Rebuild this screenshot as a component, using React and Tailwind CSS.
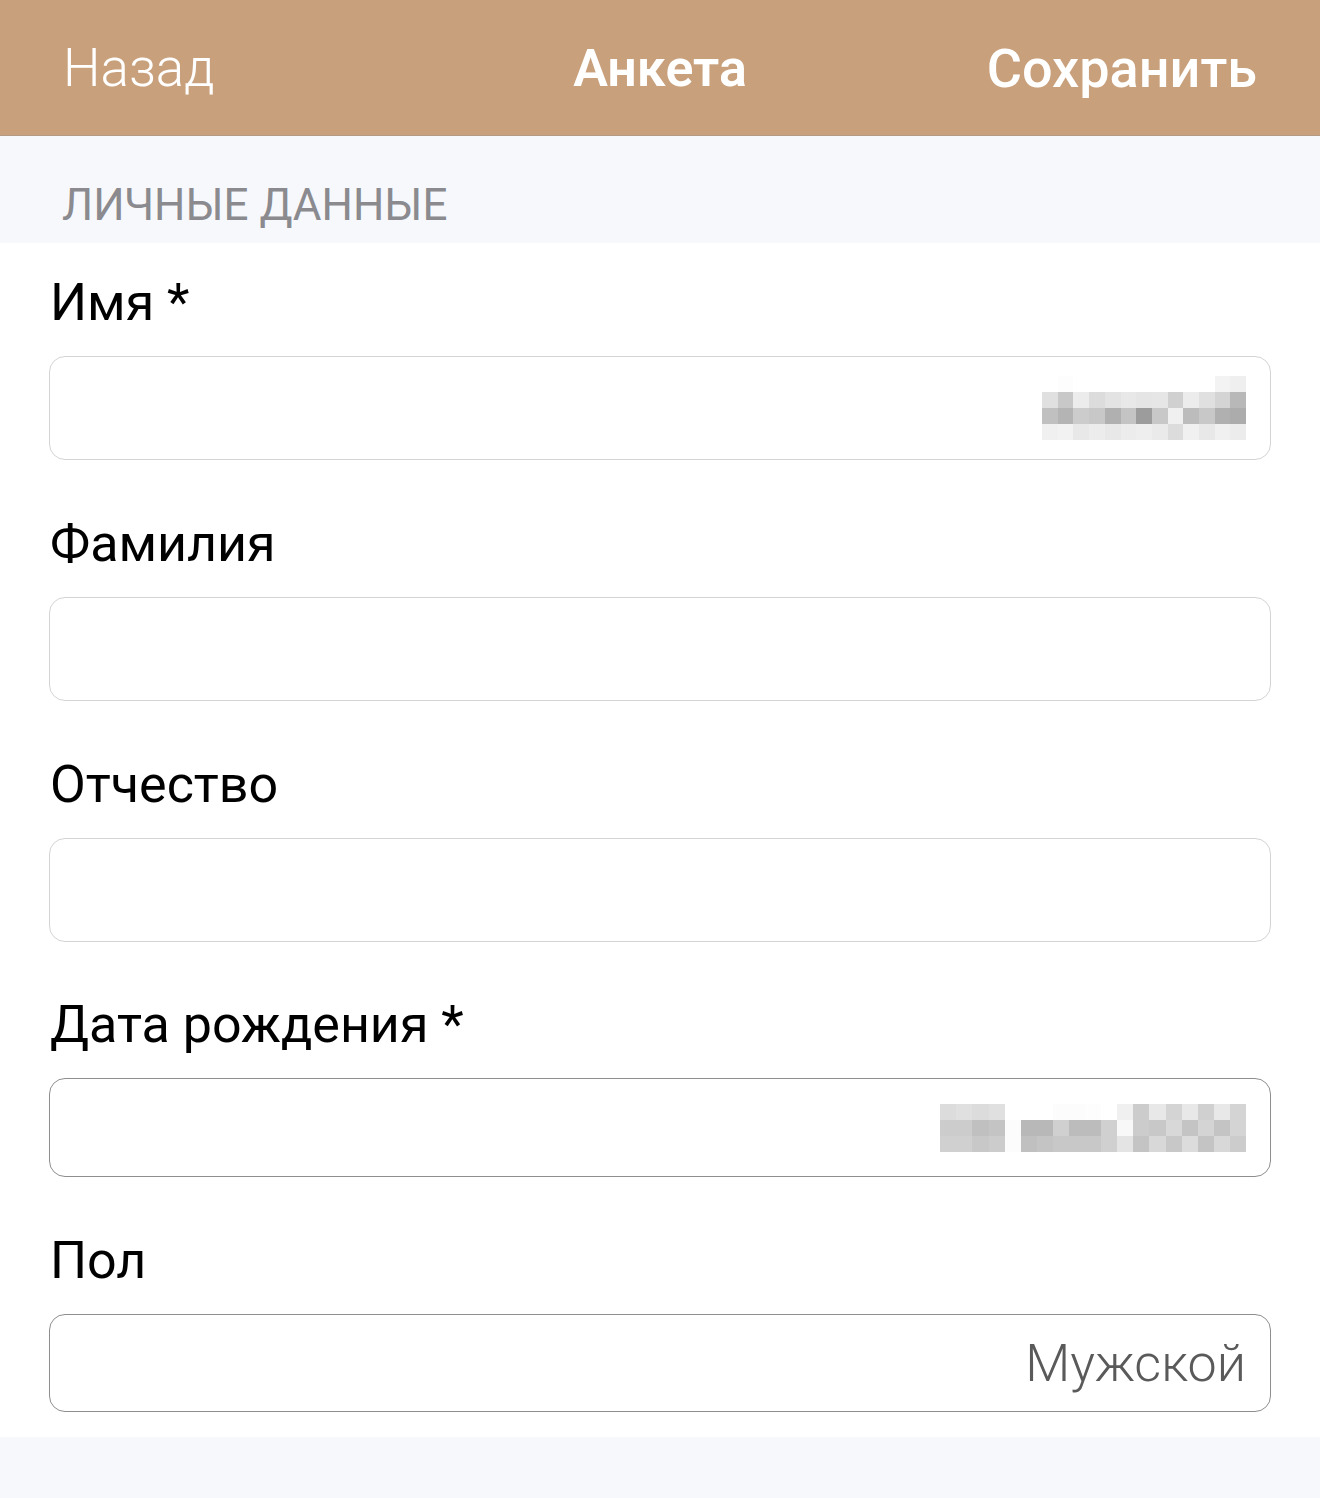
import React from "react";

const F = { fontFamily: "Roboto, 'Liberation Sans', sans-serif" };

const mosaic1 = [
  ["#ffffff","#fdfdfd","#ffffff","#ffffff","#ffffff","#ffffff","#ffffff","#ffffff","#ffffff","#ffffff","#ffffff","#f3f3f3","#efefef"],
  ["#e0e0e0","#c8c8c8","#ececec","#dcdcdc","#e3e3e3","#e8e8e8","#e5e5e5","#e6e6e6","#d0d0d0","#ececec","#e0e0e0","#d4d4d4","#b8b8b8"],
  ["#c0c0c0","#b4b4b4","#cccccc","#c8c8c8","#b0b0b0","#c4c4c4","#9c9c9c","#c8c8c8","#f0f0f0","#bcbcbc","#c8c8c8","#b0b0b0","#acacac"],
  ["#f0f0f0","#f2f2f2","#e8e8e8","#ececec","#e8e8e8","#ececec","#eeeeee","#eaeaea","#dcdcdc","#f0f0f0","#e8e8e8","#f0f0f0","#ececec"],
];

const mosaic2 = [
  ["#dcdcdc","#e0e0e0","#dcdcdc","#e0e0e0","#ffffff","#ffffff","#ffffff","#fcfcfc","#fcfcfc","#fdfdfd","#ffffff","#f0f0f0","#cccccc","#e8e8e8","#d4d4d4","#e8e8e8","#d0d0d0","#e8e8e8","#d4d4d4"],
  ["#cccccc","#cccccc","#c0c0c0","#c4c4c4","#fcfcfc","#b8b8b8","#b8b8b8","#d0d0d0","#bcbcbc","#bcbcbc","#d0d0d0","#f8f8f8","#cccccc","#c8c8c8","#d8d8d8","#c4c4c4","#d4d4d4","#c4c4c4","#d4d4d4"],
  ["#d0d0d0","#d0d0d0","#c8c8c8","#cccccc","#fcfcfc","#c0c0c0","#c4c4c4","#c8c8c8","#c8c8c8","#c8c8c8","#d0d0d0","#e4e4e4","#c4c4c4","#d8d8d8","#c8c8c8","#dcdcdc","#c4c4c4","#d8d8d8","#cccccc"],
];

function Mosaic({ data, cell }) {
  return (
    <div className="flex flex-col">
      {data.map((row, i) => (
        <div key={i} className="flex">
          {row.map((c, j) => (
            <div key={j} style={{ background: c, width: cell, height: 16 }} />
          ))}
        </div>
      ))}
    </div>
  );
}

function Field({ label, top, height, border, children }) {
  return (
    <div className="flex flex-col" style={{ paddingTop: top }}>
      <div className="text-[52px] leading-[60px] text-black pl-[50px]" style={F}>
        {label}
      </div>
      <div
        className={`mt-[23px] ml-[49px] mr-[49px] rounded-[16px] border bg-white flex items-center justify-end pr-[24px] ${border}`}
        style={{ height }}
      >
        {children}
      </div>
    </div>
  );
}

export default function App() {
  return (
    <div className="w-[1320px] min-h-[1498px] bg-[#f7f8fc]" style={F}>
      <div className="h-[136px] bg-[#c9a07c] border-b border-[#b49a85] grid grid-cols-3 items-center px-[63px] text-white">
        <span className="justify-self-start text-[53px] font-light pt-[2px]">Назад</span>
        <span className="justify-self-center text-[52px] font-semibold pt-[2px]">Анкета</span>
        <span className="justify-self-end text-[54px] font-medium pt-[2px]">Сохранить</span>
      </div>
      <div className="h-[107px] flex items-end pb-[8px] pl-[62px] text-[44px] text-[#8a8a8f] leading-[60px]">
        ЛИЧНЫЕ ДАННЫЕ
      </div>
      <div className="bg-white pb-[25px]">
        {[
          { label: "Имя *", top: 30, height: 104, border: "border-[#d4d4d4]", content: <Mosaic data={mosaic1} cell={15.7} /> },
          { label: "Фамилия", top: 54, height: 104, border: "border-[#d4d4d4]" },
          { label: "Отчество", top: 54, height: 104, border: "border-[#d4d4d4]" },
          { label: "Дата рождения *", top: 53, height: 99, border: "border-[#8e8e8e]", content: <Mosaic data={mosaic2} cell={16.1} /> },
          { label: "Пол", top: 54, height: 98, border: "border-[#8e8e8e]", content: <span className="text-[52px] font-light text-[#5a5a5a] pt-[2px]">Мужской</span> },
        ].map((f) => (
          <Field key={f.label} label={f.label} top={f.top} height={f.height} border={f.border}>
            {f.content}
          </Field>
        ))}
      </div>
    </div>
  );
}
